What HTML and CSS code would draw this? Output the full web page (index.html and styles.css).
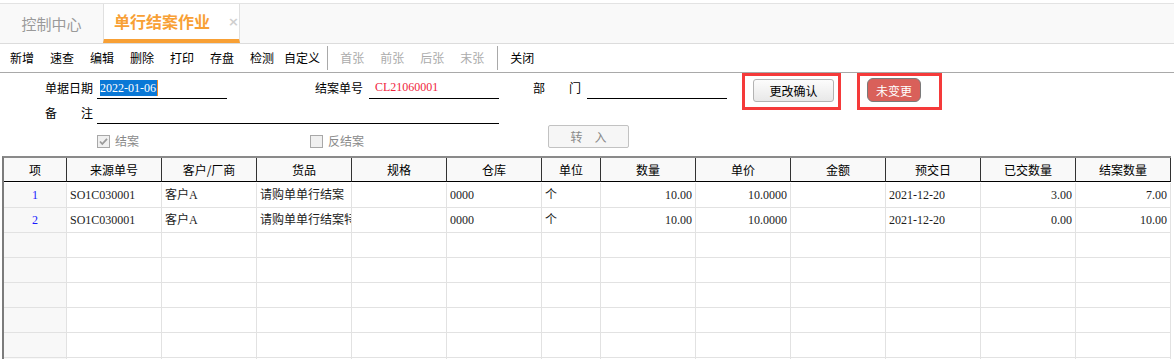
FILE: index.html
```html
<!DOCTYPE html>
<html>
<head>
  <meta charset="utf-8">
  <title>单行结案作业</title>
  <link rel="stylesheet" href="styles.css">
</head>
<body>
  <div class="tabbar">
    <div class="tab">控制中心</div>
    <div class="tab active">单行结案作业<span class="close">×</span></div>
  </div>

  <div class="toolbar">
    <span class="tool">新增</span>
    <span class="tool">速查</span>
    <span class="tool">编辑</span>
    <span class="tool">删除</span>
    <span class="tool">打印</span>
    <span class="tool">存盘</span>
    <span class="tool">检测</span>
    <span class="tool narrow">自定义</span>
    <span class="sep"></span>
    <span class="tool off">首张</span>
    <span class="tool off">前张</span>
    <span class="tool off">后张</span>
    <span class="tool off">末张</span>
    <span class="sep"></span>
    <span class="tool">关闭</span>
  </div>

  <div class="form">
    <div class="row row-1">
      <span class="label">单据日期</span>
      <span class="field date"><span class="selected">2022-01-06</span><span class="caret"></span></span>
      <span class="label l-no">结案单号</span>
      <span class="field no">CL21060001</span>
      <span class="label spread l-dept"><span>部</span><span>门</span></span>
      <span class="field dept"></span>
      <span class="mark mark-1"><button class="btn">更改确认</button></span>
      <span class="mark mark-2"><button class="btn red">未变更</button></span>
    </div>
    <div class="row row-2">
      <span class="label spread"><span>备</span><span>注</span></span>
      <span class="field memo"></span>
    </div>
    <div class="row row-3">
      <label class="check c-close">
        <svg width="13" height="13" viewBox="0 0 13 13"><rect x="0.5" y="0.5" width="12" height="12" fill="#f0f0f0" stroke="#a8a8a8"/><path d="M3 6.5 L5.3 9 L10 3.8" fill="none" stroke="#9a9a9a" stroke-width="1.8"/></svg>
        结案
      </label>
      <label class="check c-open">
        <svg width="13" height="13" viewBox="0 0 13 13"><rect x="0.5" y="0.5" width="12" height="12" fill="#f0f0f0" stroke="#a8a8a8"/></svg>
        反结案
      </label>
      <button class="btn import">转　入</button>
    </div>
  </div>

  <div class="grid">
    <div class="th">项</div>
    <div class="th">来源单号</div>
    <div class="th">客户/厂商</div>
    <div class="th">货品</div>
    <div class="th">规格</div>
    <div class="th">仓库</div>
    <div class="th">单位</div>
    <div class="th">数量</div>
    <div class="th">单价</div>
    <div class="th">金额</div>
    <div class="th">预交日</div>
    <div class="th">已交数量</div>
    <div class="th">结案数量</div>

    <div class="td idx">1</div>
    <div class="td">SO1C030001</div>
    <div class="td">客户A</div>
    <div class="td">请购单单行结案</div>
    <div class="td"></div>
    <div class="td">0000</div>
    <div class="td">个</div>
    <div class="td num">10.00</div>
    <div class="td num">10.0000</div>
    <div class="td"></div>
    <div class="td">2021-12-20</div>
    <div class="td num">3.00</div>
    <div class="td num">7.00</div>

    <div class="td idx">2</div>
    <div class="td">SO1C030001</div>
    <div class="td">客户A</div>
    <div class="td">请购单单行结案特</div>
    <div class="td"></div>
    <div class="td">0000</div>
    <div class="td">个</div>
    <div class="td num">10.00</div>
    <div class="td num">10.0000</div>
    <div class="td"></div>
    <div class="td">2021-12-20</div>
    <div class="td num">0.00</div>
    <div class="td num">10.00</div>
  </div>

  <script>
    // пустые строки таблицы
    const grid = document.querySelector('.grid');
    for (let r = 0; r < 6; r++) {
      for (let c = 0; c < 13; c++) {
        const cell = document.createElement('div');
        cell.className = c === 0 ? 'td idx' : 'td';
        grid.appendChild(cell);
      }
    }
  </script>
</body>
</html>
```

FILE: styles.css
```css
body {
  margin: 0;
  font-family: "Noto Sans CJK SC", sans-serif;
  font-size: 12px;
  color: #000;
  background-color: #ffffff;
  overflow: hidden;
}

/* tabs */
.tabbar {
  display: flex;
  margin-top: 3px;
  height: 39px;
  border-top: 1px solid #e3e3e3;
  border-bottom: 1px solid #dcdcdc;
  background-color: #f9f9f9;
}

.tab {
  width: 103px;
  text-align: center;
  font-size: 15px;
  line-height: 39px;
  color: #9a9a9a;
}

.tab.active {
  box-sizing: border-box;
  display: flex;
  align-items: center;
  width: 137px;
  height: 39px;
  padding: 0 0 0 10px;
  white-space: nowrap;
  font-size: 16px;
  font-weight: bold;
  color: #f8a035;
  background-color: #ffffff;
  border-left: 1px solid #e0e0e0;
  border-right: 1px solid #e0e0e0;
  border-bottom: 4px solid #f8a035;
}

.close {
  margin-left: 18px;
  font-family: "DejaVu Sans", sans-serif;
  font-size: 13px;
  font-weight: bold;
  color: #cfcfcf;
}

/* toolbar */
.toolbar {
  display: flex;
  align-items: center;
  height: 28px;
  border-bottom: 1px solid #a9a9a9;
}

.tool {
  padding: 0 8px;
  line-height: 28px;
  white-space: nowrap;
}

.tool:first-child {
  padding-left: 10px;
}

.tool.narrow {
  padding: 0 2px;
}

.tool.off {
  color: #ababab;
}

.sep {
  width: 1px;
  height: 24px;
  margin: 0 4px 0 5px;
  background-color: #a9a9a9;
}

/* form */
.form {
  height: 83px;
}

.row {
  display: flex;
  align-items: flex-start;
  padding-left: 45px;
}

.row-1 {
  height: 37px;
}

.row-1 .label,
.row-1 .field {
  margin-top: 4px;
}

.row-2 {
  margin-top: -8px;
  height: 22px;
}

.row-3 {
  height: 26px;
  padding-left: 97px;
}

.label {
  width: 48px;
  margin-right: 4px;
  line-height: 21px;
  white-space: nowrap;
}

.label.spread {
  display: flex;
  justify-content: space-between;
}

.l-no,
.l-dept {
  margin-right: 6px;
}

.field {
  box-sizing: border-box;
  height: 22px;
  line-height: 21px;
  border-bottom: 1px solid #000;
  padding-left: 3px;
  font-family: "Liberation Serif", "Noto Sans CJK SC", serif;
  font-size: 12px;
}

.field.date {
  width: 130px;
  margin-right: 88px;
  display: flex;
  align-items: center;
}

.selected {
  display: inline-block;
  line-height: 16px;
  padding-right: 1px;
  background-color: #0a78d6;
  color: #ffffff;
}

.caret {
  display: inline-block;
  width: 1px;
  height: 16px;
  background-color: #f08a24;
}

.field.no {
  width: 130px;
  margin-right: 34px;
  padding-left: 6px;
  color: #f0253d;
}

.field.dept {
  width: 140px;
  margin-right: 15px;
}

.field.memo {
  width: 402px;
}

.mark {
  box-sizing: border-box;
  height: 37px;
  border: 3px solid #f53a3a;
}

.mark-1 {
  width: 99px;
  padding: 3px 0 0 8px;
  margin-right: 16px;
}

.mark-2 {
  width: 85px;
  padding: 2px 0 0 7px;
}

.btn {
  box-sizing: border-box;
  width: 81px;
  height: 23px;
  padding: 0;
  font-family: "Noto Sans CJK SC", sans-serif;
  font-size: 12px;
  color: #000;
  background: linear-gradient(#fcfcfc, #e8e8e8);
  border: 1px solid #b3b3b3;
  border-radius: 3px;
}

.btn.red {
  width: 54px;
  height: 24px;
  color: #ffffff;
  background: #d9605a;
  border: 1px solid #7a7a7a;
  border-radius: 6px;
}

.btn.import {
  width: 81px;
  margin-top: 1px;
  color: #8a8a8a;
  background: #f6f6f6;
  border: 1px solid #c2c2c2;
  border-radius: 2px;
}

.check {
  display: flex;
  align-items: center;
  gap: 5px;
  margin-top: 10px;
  line-height: 14px;
  color: #8a8a8a;
}

.c-close {
  width: 213px;
}

.c-open {
  width: 238px;
}

/* table */
.grid {
  display: grid;
  grid-template-columns: 63px 95px 95px 95px 95px 95px 59px 95px 95px 95px 95px 95px 95px;
  grid-auto-rows: 25px;
  width: 1167px;
  margin-left: 2px;
  border-left: 2px solid #7c7c7c;
  border-top: 2px solid #8a8a8a;
  font-family: "Liberation Serif", "Noto Sans CJK SC", serif;
  font-size: 12px;
}

.th {
  box-sizing: border-box;
  height: 24px;
  line-height: 23px;
  text-align: center;
  font-family: "Noto Sans CJK SC", sans-serif;
  background-color: #f9f9f9;
  border-right: 1px solid #333;
  border-bottom: 1px solid #000;
}

.grid .th:nth-child(-n+13) {
  grid-row: 1;
}

.td {
  box-sizing: border-box;
  padding: 0 3px;
  line-height: 24px;
  white-space: nowrap;
  overflow: hidden;
  color: #1c1c1c;
  border-right: 1px solid #e2e2e2;
  border-bottom: 1px solid #e2e2e2;
}

.td.idx {
  text-align: center;
  color: #1a1aff;
  background-color: #f8f8f8;
}

.td.num {
  text-align: right;
}
```
